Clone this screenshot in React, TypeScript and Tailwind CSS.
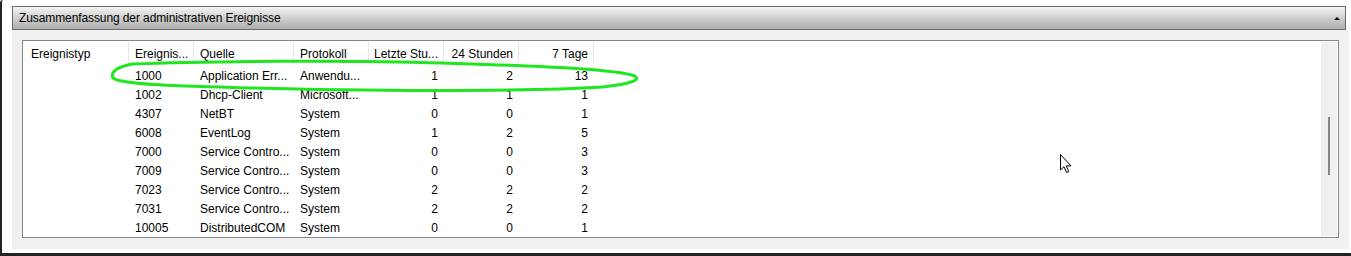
import React from "react";

interface Row {
  id: string;
  source: string;
  log: string;
  hour: number;
  day: number;
  week: number;
}

const rows: Row[] = [
  { id: "1000", source: "Application Err...", log: "Anwendu...", hour: 1, day: 2, week: 13 },
  { id: "1002", source: "Dhcp-Client", log: "Microsoft...", hour: 1, day: 1, week: 1 },
  { id: "4307", source: "NetBT", log: "System", hour: 0, day: 0, week: 1 },
  { id: "6008", source: "EventLog", log: "System", hour: 1, day: 2, week: 5 },
  { id: "7000", source: "Service Contro...", log: "System", hour: 0, day: 0, week: 3 },
  { id: "7009", source: "Service Contro...", log: "System", hour: 0, day: 0, week: 3 },
  { id: "7023", source: "Service Contro...", log: "System", hour: 2, day: 2, week: 2 },
  { id: "7031", source: "Service Contro...", log: "System", hour: 2, day: 2, week: 2 },
  { id: "10005", source: "DistributedCOM", log: "System", hour: 0, day: 0, week: 1 },
];

const columns = [
  { label: "Ereignistyp", width: "w-[106px]", pad: "pl-[8px]", right: false },
  { label: "Ereignis...", width: "w-[65px]", pad: "pl-[6px]", right: false },
  { label: "Quelle", width: "w-[100px]", pad: "pl-[6px]", right: false },
  { label: "Protokoll", width: "w-[75px]", pad: "pl-[6px]", right: false },
  { label: "Letzte Stu...", width: "w-[75px]", pad: "pr-[5px]", right: true },
  { label: "24 Stunden", width: "w-[75px]", pad: "pr-[5px]", right: true },
  { label: "7 Tage", width: "w-[75px]", pad: "pr-[5px]", right: true },
];

function cellsFor(row: Row) {
  return ["", row.id, row.source, row.log, String(row.hour), String(row.day), String(row.week)];
}

export default function App() {
  return (
    <div
      className="relative w-[1351px] h-[256px] overflow-hidden bg-white border-l-2 border-b-[3px] border-[#232323] rounded-tl-[3px] text-[12px] text-black"
      style={{ fontFamily: '"Segoe UI", "Liberation Sans", Arial, sans-serif' }}
    >
      <div className="flex flex-col h-full pl-[10px] pt-[6px] pr-[2px] pb-[4px]">
        {/* panel header */}
        <div className="h-[24px] mr-[3px] shrink-0 flex items-center justify-between border border-[#6b6b6b] bg-gradient-to-b from-[#f3f3f3] to-[#adadad] pl-[6px] pr-[5px]">
          <span className="leading-none tracking-[-0.1px]">Zusammenfassung der administrativen Ereignisse</span>
          <span className="w-0 h-0 border-l-[3px] border-r-[3px] border-b-[3px] border-l-transparent border-r-transparent border-b-black" />
        </div>

        {/* panel body */}
        <div className="flex-1 bg-[#f0f0f0] pl-[10px] pr-[10px] pt-[10px]">
          <div className="h-[198px] border border-[#828790] bg-white flex overflow-hidden">
            <div className="flex-1 flex flex-col">
              <div className="h-[25px] flex shrink-0">
                {columns.map((c) => (
                  <div key={c.label} className={`${c.width} flex items-start`}>
                    <span
                      className={`flex-1 h-[24px] leading-[26px] whitespace-nowrap overflow-hidden ${c.pad} ${c.right ? "text-right" : ""}`}
                    >
                      {c.label}
                    </span>
                    <span className="w-px h-[21px] mt-[1px] bg-[#e5e5e5]" />
                  </div>
                ))}
              </div>
              {rows.map((r) => (
                <div key={r.id} className="h-[19px] flex shrink-0">
                  {cellsFor(r).map((v, i) => (
                    <div
                      key={i}
                      className={`${columns[i].width} h-[19px] leading-[21px] whitespace-nowrap overflow-hidden ${
                        columns[i].right ? "text-right pr-[6px]" : columns[i].pad
                      }`}
                    >
                      {v}
                    </div>
                  ))}
                </div>
              ))}
            </div>

            {/* scrollbar */}
            <div className="w-[16px] my-px mr-px bg-[#f0f0f0] flex justify-center pt-[75px]">
              <div className="w-[2px] h-[58px] bg-[#858585]" />
            </div>
          </div>
        </div>
      </div>

      {/* ink annotation */}
      <svg className="absolute left-0 top-0 pointer-events-none" width="1351" height="256">
        <path
          d="M 130 64 C 200 61, 350 60, 440 63 C 530 66, 600 68, 630 75 C 642 79, 630 84, 600 87 C 520 92, 350 91, 250 88 C 180 86, 120 85, 111 78 C 108 72, 115 67, 130 64 Z"
          fill="none"
          stroke="#1fe61f"
          strokeWidth="3"
          strokeLinecap="round"
        />
      </svg>

      {/* mouse pointer */}
      <svg className="absolute left-[1057px] top-[154px] pointer-events-none" width="14" height="20" viewBox="0 0 14 20">
        <path
          d="M1.5 0.5 L1.5 16 L5 12.7 L7.6 18.5 L9.8 17.6 L7.3 11.9 L12 11.9 Z"
          fill="#fff"
          stroke="#000"
          strokeWidth="1"
          strokeLinejoin="miter"
        />
      </svg>
    </div>
  );
}
